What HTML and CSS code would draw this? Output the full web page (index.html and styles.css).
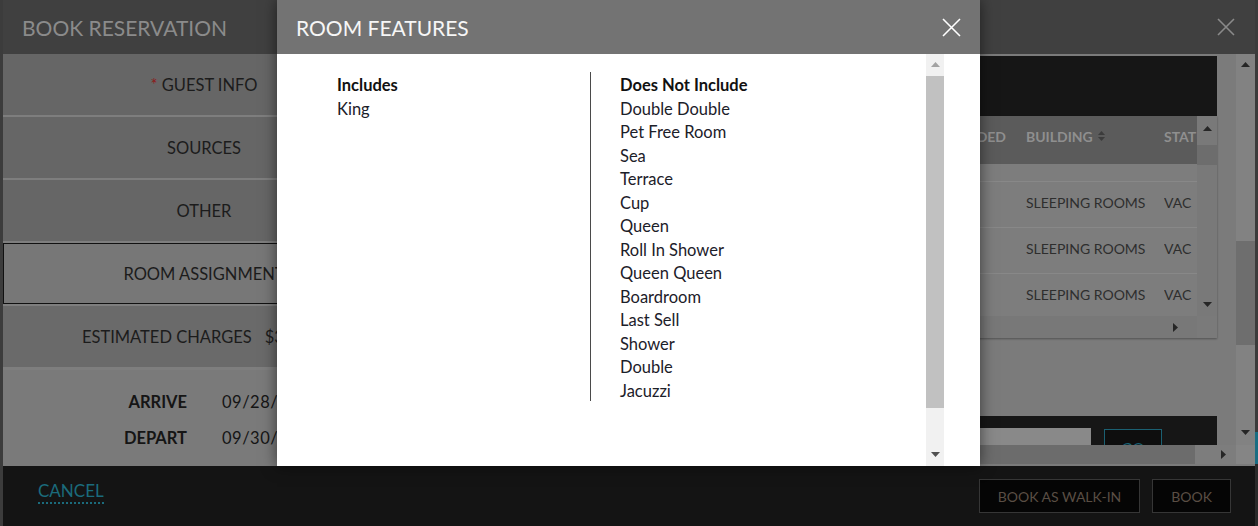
FILE: index.html
```html
<!DOCTYPE html>
<html lang="en">
<head>
<meta charset="utf-8">
<title>Book Reservation - Room Features</title>
<link rel="stylesheet" href="styles.css">
</head>
<body>
<div class="app">
  <div class="edge-left"></div>
  <div class="dialog">
    <header class="dlg-head">
      <h1 class="dlg-title">BOOK RESERVATION</h1>
      <span class="dlg-close"><svg width="18" height="18" viewBox="0 0 18 18"><path d="M1 1L17 17M17 1L1 17" stroke="#8a8a8a" stroke-width="1.6" fill="none"/></svg></span>
    </header>
    <div class="dlg-body">
      <nav class="nav">
        <div class="nav-item"><span class="req">*</span>&nbsp;GUEST INFO</div>
        <div class="nav-item">SOURCES</div>
        <div class="nav-item">OTHER</div>
        <div class="nav-item nav-active">ROOM ASSIGNMENT</div>
        <div class="nav-item nav-charges">ESTIMATED CHARGES<span class="amount">$358.00</span></div>
        <div class="summary">
          <div class="sum-row"><span class="lbl">ARRIVE</span><span class="val">09/28/2023</span></div>
          <div class="sum-row"><span class="lbl">DEPART</span><span class="val">09/30/2023</span></div>
          <div class="sum-row"><span class="lbl">NIGHTS</span><span class="val">2</span></div>
        </div>
      </nav>
      <section class="main">
        <div class="viewport">
          <div class="topbar"></div>
          <div class="table">
            <div class="tbl-view">
              <div class="tr thead">
                <div class="c1">ADDED</div>
                <div class="c2">BUILDING <svg class="sort" width="7" height="12" viewBox="0 0 7 12"><path d="M3.5 1L7 5H0Z M0 7H7L3.5 11Z" fill="#3c3c3c"/></svg></div>
                <div class="c3">STATUS</div>
              </div>
              <div class="tr trow first"><div class="c1"></div><div class="c2"></div><div class="c3"></div></div>
              <div class="tr trow"><div class="c1"></div><div class="c2">SLEEPING ROOMS</div><div class="c3">VAC</div></div>
              <div class="tr trow"><div class="c1"></div><div class="c2">SLEEPING ROOMS</div><div class="c3">VAC</div></div>
              <div class="tr trow"><div class="c1"></div><div class="c2">SLEEPING ROOMS</div><div class="c3">VAC</div></div>
            </div>
            <div class="tbl-vscroll">
              <span class="arr"><svg width="9" height="5" viewBox="0 0 9 5"><path d="M4.5 0L9 5H0Z" fill="#262626"/></svg></span>
              <span class="tbl-thumb"></span>
              <span class="grow"></span>
              <span class="arr"><svg width="9" height="5" viewBox="0 0 9 5"><path d="M0 0H9L4.5 5Z" fill="#262626"/></svg></span>
            </div>
            <div class="tbl-hscroll">
              <span class="arr-r"><svg width="5" height="9" viewBox="0 0 5 9"><path d="M0 0L5 4.5L0 9Z" fill="#262626"/></svg></span>
            </div>
            <div class="tbl-corner"></div>
          </div>
          <div class="gap"></div>
          <div class="botbar">
            <span class="search"></span>
            <span class="go">GO</span>
          </div>
        </div>
        <div class="vscroll">
          <span class="arr"><svg width="9" height="5" viewBox="0 0 9 5"><path d="M4.5 0L9 5H0Z" fill="#262626"/></svg></span>
          <span class="thumb"></span>
          <span class="grow"></span>
          <span class="arr"><svg width="9" height="5" viewBox="0 0 9 5"><path d="M0 0H9L4.5 5Z" fill="#262626"/></svg></span>
        </div>
        <div class="hscroll">
          <span class="hthumb"></span>
          <span class="arr-r"><svg width="5" height="9" viewBox="0 0 5 9"><path d="M0 0L5 4.5L0 9Z" fill="#262626"/></svg></span>
        </div>
        <div class="corner"></div>
      </section>
    </div>
    <footer class="dlg-foot">
      <a class="cancel">CANCEL</a>
      <div class="actions">
        <button class="btn">BOOK AS WALK-IN</button>
        <button class="btn">BOOK</button>
      </div>
    </footer>
  </div>
  <div class="edge-right"></div>

  <div class="modal">
    <header class="m-head">
      <h2 class="m-title">ROOM FEATURES</h2>
      <span class="m-close"><svg width="19" height="19" viewBox="0 0 19 19"><path d="M1 1L18 18M18 1L1 18" stroke="#ffffff" stroke-width="1.6" fill="none"/></svg></span>
    </header>
    <div class="m-body">
      <div class="m-content">
        <div class="col col-inc">
          <h3 class="col-title">Includes</h3>
          <ul class="list">
            <li>King</li>
          </ul>
        </div>
        <div class="col col-exc">
          <h3 class="col-title">Does Not Include</h3>
          <ul class="list">
            <li>Double Double</li>
            <li>Pet Free Room</li>
            <li>Sea</li>
            <li>Terrace</li>
            <li>Cup</li>
            <li>Queen</li>
            <li>Roll In Shower</li>
            <li>Queen Queen</li>
            <li>Boardroom</li>
            <li>Last Sell</li>
            <li>Shower</li>
            <li>Double</li>
            <li>Jacuzzi</li>
          </ul>
        </div>
      </div>
      <div class="m-scroll">
        <span class="m-arr-up"><svg width="9" height="5" viewBox="0 0 9 5"><path d="M4.5 0L9 5H0Z" fill="#a3a3a3"/></svg></span>
        <span class="m-thumb"></span>
        <span class="grow"></span>
        <span class="m-arr-down"><svg width="9" height="5" viewBox="0 0 9 5"><path d="M0 0H9L4.5 5Z" fill="#505050"/></svg></span>
      </div>
    </div>
  </div>
</div>
</body>
</html>
```

FILE: styles.css
```css
* { box-sizing: border-box; }

html, body {
  margin: 0;
  padding: 0;
}

body {
  width: 1258px;
  height: 526px;
  overflow: hidden;
  background: #3a3a3a;
  font-family: Lato, "Liberation Sans", sans-serif;
}

.app {
  position: relative;
  display: flex;
  height: 526px;
}

.edge-left {
  width: 3px;
  background: #3c3c3c;
}

.edge-right {
  width: 3px;
  background: linear-gradient(to bottom, #3b3b3b 0, #3b3b3b 432px, #1b6d82 432px, #1b6d82 464px, #2a2a2a 464px);
}

.dialog {
  width: 1252px;
  display: flex;
  flex-direction: column;
}

/* header */
.dlg-head {
  height: 54px;
  flex: none;
  background: #404040;
  display: flex;
  align-items: center;
  justify-content: space-between;
  padding: 0 20px 0 19px;
}

.dlg-title {
  margin: 0;
  font-size: 21px;
  font-weight: 400;
  color: #8b8b8b;
}

.dlg-close { display: flex; }

/* body */
.dlg-body {
  height: 412px;
  flex: none;
  display: flex;
}

.nav {
  width: 402px;
  flex: none;
  background: #7e7e7e;
  overflow: hidden;
  display: flex;
  flex-direction: column;
}

.nav-item {
  height: 61px;
  flex: none;
  display: flex;
  align-items: center;
  justify-content: center;
  background: #666666;
  margin-bottom: 2px;
  font-size: 16.5px;
  color: #1c1c1c;
}

.req { color: #8a1c1c; }

.nav-active {
  background: #777777;
  border: 1px solid #111111;
}

.nav-charges {
  background: #6a6a6a;
  margin-bottom: 3px;
}

.amount { margin-left: 13px; }

.summary {
  flex: 1;
  background: #7a7a7a;
  padding-top: 14px;
}

.sum-row {
  height: 36px;
  display: grid;
  grid-template-columns: 184px auto;
  column-gap: 35px;
  align-items: center;
  font-size: 16.5px;
  color: #151515;
}

.lbl {
  text-align: right;
  font-weight: 700;
}

.val { letter-spacing: 0.5px; }

/* main scroll area */
.main {
  flex: 1;
  display: grid;
  grid-template-columns: 1fr 19px;
  grid-template-rows: 391px 19px;
  background: #7b7b7b;
}

.viewport {
  overflow: hidden;
  padding: 2px 19px 0 0;
}

.topbar {
  height: 60px;
  background: #161616;
}

.table {
  height: 222px;
  display: grid;
  grid-template-columns: 1fr 20px;
  grid-template-rows: 200px 22px;
  background: #7d7d7d;
  box-shadow: 0 1px 2px rgba(0, 0, 0, 0.35);
}

.tbl-view { overflow: hidden; }

.tr {
  display: flex;
  align-items: center;
  white-space: nowrap;
}

.c1 {
  flex: 1;
  text-align: right;
  padding-right: 20px;
}

.c2 {
  width: 138px;
  flex: none;
  display: flex;
  align-items: center;
}

.c3 {
  width: 33px;
  flex: none;
  overflow: hidden;
}

.thead {
  height: 48px;
  padding-bottom: 8px;
  background: #5b5b5b;
  font-size: 14px;
  font-weight: 700;
  color: #8f8f8f;
}

.sort { margin-left: 5px; }

.trow {
  height: 46px;
  padding-bottom: 4px;
  border-bottom: 1px solid #888888;
  font-size: 14px;
  color: #2e2e2e;
}

.trow.first { height: 18px; padding-bottom: 0; }

.tbl-vscroll {
  background: #797979;
  display: flex;
  flex-direction: column;
  align-items: center;
}

.arr {
  height: 24px;
  flex: none;
  display: flex;
  align-items: center;
  justify-content: center;
}

.tbl-thumb {
  width: 20px;
  height: 20px;
  margin-top: 5px;
  background: #6d6d6d;
}

.grow { flex: 1; }

.tbl-hscroll {
  background: #787878;
  display: flex;
  align-items: center;
  justify-content: flex-end;
  padding-right: 9px;
}

.tbl-corner { background: #7a7a7a; }

.gap { height: 78px; }

.botbar {
  height: 60px;
  background: #161616;
  display: flex;
  align-items: flex-start;
  justify-content: flex-end;
  padding: 12px 55px 0 0;
}

.search {
  width: 300px;
  height: 24px;
  background: #898989;
}

.go {
  margin-left: 13px;
  margin-top: 1px;
  width: 58px;
  height: 36px;
  border: 1px solid #1b6072;
  background: #0e0e0e;
  color: #1b6072;
  font-size: 15px;
  text-align: center;
  line-height: 36px;
}

.vscroll {
  background: #828282;
  display: flex;
  flex-direction: column;
  align-items: center;
}

.vscroll .arr { height: 20px; }

.thumb {
  width: 19px;
  height: 104px;
  margin-top: 167px;
  background: #6e6e6e;
}

.vscroll .arr:last-child { height: 26px; }

.hscroll {
  background: #7d7d7d;
  display: flex;
  align-items: center;
}

.hthumb {
  width: 790px;
  height: 19px;
  background: #6c6c6c;
}

.arr-r {
  margin-left: auto;
  margin-right: 10px;
  display: flex;
}

.corner { background: #858585; }

/* footer */
.dlg-foot {
  height: 60px;
  flex: none;
  background: #141414;
  display: flex;
  align-items: center;
  justify-content: space-between;
  padding: 0 24px 0 35px;
}

.cancel {
  color: #1b6b7c;
  font-size: 17px;
  line-height: 17px;
  padding-bottom: 3px;
  border-bottom: 2px dotted #1b6b7c;
  margin-top: -6px;
}

.actions {
  display: flex;
  gap: 12px;
}

.btn {
  height: 34px;
  padding: 0 18px;
  border: 1px solid #363636;
  background: #050505;
  color: #5a4e44;
  font-family: Lato, "Liberation Sans", sans-serif;
  font-size: 14px;
}

/* modal */
.modal {
  position: absolute;
  left: 277px;
  top: 0;
  width: 703px;
  height: 466px;
  background: #ffffff;
  box-shadow: 0 0 14px rgba(0, 0, 0, 0.55);
  display: flex;
  flex-direction: column;
}

.m-head {
  height: 54px;
  flex: none;
  background: #737373;
  display: flex;
  align-items: center;
  justify-content: space-between;
  padding: 0 19px 0 19px;
}

.m-title {
  margin: 0;
  font-size: 21px;
  font-weight: 400;
  color: #f6f6f6;
}

.m-close { display: flex; }

.m-body {
  flex: 1;
  display: flex;
  padding-right: 36px;
}

.m-content {
  flex: 1;
  display: flex;
  align-items: flex-start;
  padding: 18px 0 0 60px;
  color: #1c2029;
}

.col {
  padding-top: 2px;
}

.col-inc { width: 253px; }

.col-exc {
  border-left: 1px solid #4a4a4a;
  padding-left: 29px;
  margin-bottom: 0;
}

.col-exc .list { margin-bottom: -2px; }

.col-title {
  margin: 0;
  font-size: 16.5px;
  font-weight: 700;
  line-height: 23.5px;
  color: #111111;
}

.list {
  margin: 0;
  padding: 0;
  list-style: none;
  font-size: 16.5px;
  line-height: 23.5px;
}

.m-scroll {
  width: 18px;
  flex: none;
  background: #f1f1f1;
  display: flex;
  flex-direction: column;
}

.m-arr-up {
  height: 21px;
  display: flex;
  align-items: center;
  justify-content: center;
}

.m-thumb {
  height: 332px;
  margin-top: 1px;
  background: #c1c1c1;
}

.m-arr-down {
  height: 24px;
  display: flex;
  align-items: center;
  justify-content: center;
}
```
